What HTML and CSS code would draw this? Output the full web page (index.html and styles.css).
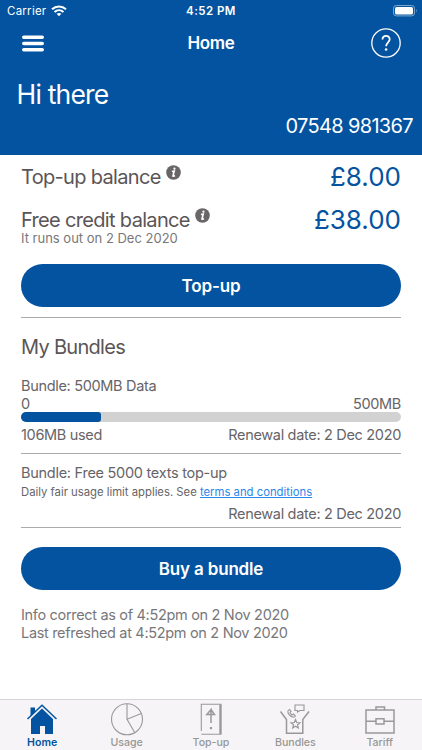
FILE: index.html
```html
<!DOCTYPE html>
<html lang="en">
<head>
<meta charset="utf-8">
<title>Home</title>
<link rel="stylesheet" href="styles.css">
</head>
<body>
<div class="app">
  <header class="header">
    <div class="status">
      <div class="carrier"><span>Carrier</span>
        <svg width="16" height="12" viewBox="0 0 16 12" fill="none" stroke="#fff" stroke-width="2"><path d="M1 4.3C5 .5 11 .5 15 4.3"/><path d="M3.5 7C6.2 4.5 9.8 4.5 12.500 7"/><path d="M8 11.300L5.600 8.800Q8 7 10.400 8.800Z" fill="#fff" stroke="none"/></svg>
      </div>
      <span class="time">4:52 PM</span>
      <svg class="battery" width="25" height="12" viewBox="0 0 25 12"><rect x=".5" y=".5" width="21" height="10.400" rx="2.800" fill="none" stroke="#7fa8d1"/><rect x="2" y="2" width="18" height="7.400" rx="1.500" fill="#fff"/><path d="M23 4Q24.500 5.700 23 7.400Z" fill="#7fa8d1"/></svg>
    </div>
    <nav class="navbar">
      <svg width="22" height="17" viewBox="0 0 22 17" stroke="#fff" stroke-width="3.600" stroke-linecap="round"><path d="M1.800 2.200H20.200M1.800 8.500H20.200M1.800 14.700H20.200"/></svg>
      <span class="title">Home</span>
      <svg width="30" height="30" viewBox="0 0 30 30" fill="none" stroke="#fff"><circle cx="15" cy="15" r="14.200" stroke-width="1.300"/><path d="M11.500 11.500C11.500 6.800 18.700 6.800 18.700 11.300C18.700 14.200 15.100 14.500 15.100 18.300" stroke-width="1.800"/><circle cx="15.100" cy="21.500" r="1.300" fill="#fff" stroke="none"/></svg>
    </nav>
    <div class="greeting">Hi there</div>
    <div class="number">07548 981367</div>
  </header>
  <main class="content">
    <div class="balance">
      <span class="label">Top-up balance</span>
      <svg class="info" viewBox="0 0 16 16"><circle cx="8" cy="8" r="7.800" fill="#696668"/><path d="M6.300 6.900L8.800 6.400L7.400 11.700Q7.600 12.600 9.500 11.200" fill="none" stroke="#fff" stroke-width="1.700"/><circle cx="9" cy="3.900" r="1.200" fill="#fff"/></svg>
      <span class="amount">£8.00</span>
    </div>
    <div class="balance">
      <span class="label">Free credit balance</span>
      <svg class="info" viewBox="0 0 16 16"><circle cx="8" cy="8" r="7.800" fill="#696668"/><path d="M6.300 6.900L8.800 6.400L7.400 11.700Q7.600 12.600 9.500 11.200" fill="none" stroke="#fff" stroke-width="1.700"/><circle cx="9" cy="3.900" r="1.200" fill="#fff"/></svg>
      <span class="amount">£38.00</span>
    </div>
    <div class="expiry">It runs out on 2 Dec 2020</div>
    <button class="button">Top-up</button>
    <section class="bundles">
      <h2>My Bundles</h2>
      <div class="row">Bundle: 500MB Data</div>
      <div class="row limits"><span>0</span><span>500MB</span></div>
      <div class="progress"><div class="used" style="width:21.100%"></div></div>
      <div class="row usage"><span>106MB used</span><span>Renewal date: 2 Dec 2020</span></div>
    </section>
    <section class="texts">
      <div class="row free">Bundle: Free 5000 texts top-up</div>
      <div class="fair">Daily fair usage limit applies. See <a href="#">terms and conditions</a></div>
      <div class="row end"><span>Renewal date: 2 Dec 2020</span></div>
    </section>
    <div class="buy"><button class="button">Buy a bundle</button></div>
    <div class="stamp">Info correct as of 4:52pm on 2 Nov 2020</div>
    <div class="stamp">Last refreshed at 4:52pm on 2 Nov 2020</div>
  </main>
  <footer class="tabs">
    <div class="tab active"><svg width="34" height="34" viewBox="0 0 34 34"><path d="M5.500 4.500H10V9L5.500 13Z" fill="#0353a0"/><path d="M2.500 16L17 2.200L31.500 16" fill="none" stroke="#0353a0" stroke-width="1.500"/><path d="M17 5.500L28 16V31H20V23H15V31H6V16Z" fill="#0353a0"/></svg><span>Home</span></div>
    <div class="tab"><svg width="34" height="34" viewBox="0 0 34 34"><circle cx="17" cy="16.300" r="15.500"/><path d="M17 .800V16.300L31.300 10.500M17 16.300L24.800 29.700"/></svg><span>Usage</span></div>
    <div class="tab"><svg width="34" height="34" viewBox="0 0 34 34"><path d="M7.300 28V1.300H27V31.200H7.300"/><path d="M26.300 1.500V31" stroke-width="2"/><path d="M17 20V6.500L12.800 11.500H20.500L17 6.500" stroke-width="1.500"/><path d="M17 24V26.200" stroke-width="2.200"/></svg><span>Top-up</span></div>
    <div class="tab"><svg width="34" height="34" viewBox="0 0 34 34"><path d="M2.500 8.500L8.500 16.500V30.200H24.800V16.500L31 8.500" stroke-width="1.500"/><path d="M17 2H26V7.500H22L19.500 9V7.500H17Z"/><path d="M11.500 6.500C9 7.500 9.500 10 11.500 12C13.500 14 16 15 17.500 13L15.500 11L14 12L12 9.500L13 8.500Z"/><path d="M17.500 16.500L18.700 19.500L22 19.700L19.500 21.800L20.300 25L17.500 23.200L14.700 25L15.500 21.800L13 19.700L16.300 19.500Z" stroke-width="1.200"/></svg><span>Bundles</span></div>
    <div class="tab"><svg width="34" height="34" viewBox="0 0 34 34"><path d="M3 7H31V30H3ZM13 7V4H21.500V7M3 18.200H13M21 18.200H31M13 15.700H21V21H13Z" stroke-width="1.500"/></svg><span>Tariff</span></div>
  </footer>
</div>
</body>
</html>
```
FILE: styles.css
```css
* { box-sizing: border-box; }
body { margin: 0; font-family: Inter, "Liberation Sans", sans-serif; background: #fff; }
.app { width: 422px; height: 750px; display: flex; flex-direction: column; overflow: hidden; white-space: nowrap; }
.header { height: 155px; background: #0353a0; color: #fff; }
.status { height: 22px; display: grid; grid-template-columns: 1fr auto 1fr; align-items: center; padding: 0 7px; }
.carrier { display: flex; align-items: center; gap: 5px; font-size: 11.5px; letter-spacing: .25px; }
.time { font-size: 11.5px; font-weight: 600; letter-spacing: .45px; }
.battery { justify-self: end; margin-right: -3px; }
.navbar { height: 42px; display: flex; align-items: center; justify-content: space-between; padding: 0 21px 0 22px; }
.title { font-size: 17px; font-weight: 600; margin-left: 7px; letter-spacing: -.4px; }
.greeting { padding-left: 16.5px; font-size: 26.5px; letter-spacing: -.8px; line-height: 60px; height: 47px; }
.number { padding-right: 9px; text-align: right; font-size: 20px; letter-spacing: -.65px; line-height: 30px; }
.content { flex: 1; padding: 0 21px; color: #5a5557; }
.balance { display: flex; height: 43px; align-items: center; }
.label { font-size: 20px; letter-spacing: -.67px; }
.info { width: 15px; height: 15px; margin: 0 0 8px 5.5px; }
.amount { margin-left: auto; font-size: 26px; color: #0353a0; }
.expiry { font-size: 13px; line-height: 18px; margin-top: -12px; color: #77777a; }
.button { display: block; width: 100%; height: 43px; padding: 0; border: 0; border-radius: 22px; background: #0353a0; color: #fff; font: 600 17px Inter, sans-serif; letter-spacing: -.17px; }
.expiry + .button { margin-top: 17px; }
.bundles { margin-top: 10px; border-top: 1px solid #aaa; height: 136px; }
h2 { margin: 15px 0 0; font-size: 20px; font-weight: 400; letter-spacing: -.7px; line-height: 28px; }
.row { font-size: 14.5px; line-height: 18px; color: #666467; letter-spacing: -.32px; }
h2 + .row { margin-top: 16px; }
.limits, .usage { display: flex; justify-content: space-between; }
.limits { line-height: 17px; height: 16.5px; }
.progress { height: 10.5px; border-radius: 5px; background: #d2d2d2; overflow: hidden; }
.used { height: 100%; background: #0353a0; border-radius: 0 3px 3px 0; }
.usage { margin-top: 4px; }
.texts { border-top: 1px solid #aaa; border-bottom: 1px solid #aaa; height: 75px; }
.free { margin-top: 10px; letter-spacing: -.27px; }
.fair { font-size: 11.3px; line-height: 20px; color: #666467; }
.fair a { color: #2a87ea; }
.end { text-align: right; margin-top: 3px; }
.buy { margin-top: 19px; margin-bottom: 16px; }
.stamp { font-size: 14.5px; letter-spacing: -.32px; line-height: 17.5px; color: #77777a; }
.tabs { height: 51px; border-top: 1px solid #d5d5d7; background: #f6f4f6; display: grid; grid-template-columns: repeat(5, 84.4px); }
.tab { display: flex; flex-direction: column; align-items: center; padding-top: 3px; font-size: 10.6px; font-weight: 500; line-height: 11px; color: #979797; }
.tab svg { fill: none; stroke: #999; stroke-width: 1.1; }
.active { color: #0353a0; font-weight: 600; }
.active svg { stroke: none; }
```
